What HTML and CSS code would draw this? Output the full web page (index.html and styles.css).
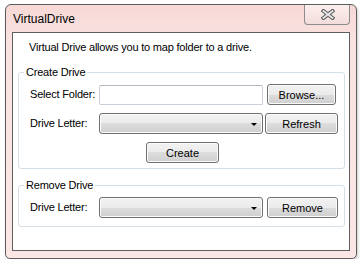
FILE: index.html
```html
<!DOCTYPE html>
<html lang="en">
<head>
    <meta charset="UTF-8">
    <title>VirtualDrive</title>
    <link rel="stylesheet" href="styles.css">
</head>
<body>
    <div class="window">
        <div class="titlebar">
            <span class="title">VirtualDrive</span>
            <button class="close" title="Close">
                <svg width="14" height="11" viewBox="0 0 14 11">
                    <path d="M2.5 2 L11.5 9 M11.5 2 L2.5 9" stroke="#5f5f5f" stroke-width="4" stroke-linecap="square"/>
                    <path d="M2.5 2 L11.5 9 M11.5 2 L2.5 9" stroke="#e6e6e6" stroke-width="1.8" stroke-linecap="square"/>
                </svg>
            </button>
        </div>

        <div class="client">
            <p class="intro">Virtual Drive allows you to map folder to a drive.</p>

            <fieldset class="group group-create">
                <legend>Create Drive</legend>
                <div class="row">
                    <label>Select Folder:</label>
                    <input type="text" class="textbox">
                    <button class="btn btn-browse">Browse...</button>
                </div>
                <div class="row">
                    <label>Drive Letter:</label>
                    <div class="combo"><span class="arrow"></span></div>
                    <button class="btn btn-refresh">Refresh</button>
                </div>
                <div class="row">
                    <button class="btn btn-create">Create</button>
                </div>
            </fieldset>

            <fieldset class="group group-remove">
                <legend>Remove Drive</legend>
                <div class="row">
                    <label>Drive Letter:</label>
                    <div class="combo"><span class="arrow"></span></div>
                    <button class="btn btn-remove">Remove</button>
                </div>
            </fieldset>
        </div>
    </div>
</body>
</html>
```

FILE: styles.css
```css
* {
    box-sizing: border-box;
}
body {
    margin: 0;
    background-color: #fff;
    font-family: 'Liberation Sans', Arial, sans-serif;
    font-size: 11px;
    letter-spacing: -0.2px;
    color: #000;
}
.window {
    margin: 4px 0 0 5px;
    width: 352px;
    height: 255px;
    border: 1px solid #5c5c5c;
    border-radius: 6px 6px 5px 5px;
    background: linear-gradient(#f7d9d7, #f9e3e1 40px, #fae7e5);
    box-shadow: 1px 2px 3px rgba(0,0,0,0.2);
}
.titlebar {
    height: 27px;
    display: flex;
    justify-content: space-between;
    align-items: flex-start;
}
.title {
    font-size: 12px;
    letter-spacing: 0;
    padding: 7px 0 0 7px;
}
.close {
    width: 46px;
    height: 20px;
    margin-right: 6px;
    padding: 0 0 1px 2px;
    border: 1px solid #8c8c8c;
    border-top: none;
    border-radius: 0 0 4px 4px;
    background: linear-gradient(#fcefee, #f3dddb);
    display: flex;
    align-items: center;
    justify-content: center;
}
.client {
    margin: 0 6px;
    height: 219px;
    border: 1px solid #5e5e5e;
    background-color: #fff;
}
.intro {
    margin: 0;
    padding: 8px 0 0 16px;
    line-height: 13px;
}
.group {
    margin: 12px 4px 0 5px;
    padding: 5px 0 5px 0;
    border: 1px solid #d5dfe5;
    border-radius: 3px;
    min-width: 0;
}
.group legend {
    margin-left: 5px;
    padding: 0 2px;
    line-height: 13px;
}
.group-remove {
    margin-top: 10px;
    padding-bottom: 8px;
}
.row {
    display: flex;
    align-items: flex-start;
    height: 21px;
    padding-left: 11px;
    margin-top: 8px;
}
.row:first-of-type {
    margin-top: 0;
}
.row label {
    width: 69px;
    line-height: 21px;
}
.textbox {
    width: 164px;
    height: 20px;
    margin: 1px 0 0 0;
    border: 1px solid #c9d0d8;
    border-top-color: #b3b8c0;
    border-radius: 2px;
    font: inherit;
}
.btn,
.combo {
    height: 21px;
    border: 1px solid #707070;
    border-radius: 3px;
    background: linear-gradient(#f2f2f2, #ebebeb 50%, #dddddd 50%, #cfcfcf);
    box-shadow: inset 0 0 0 1px #fbfbfb;
    font: inherit;
    color: #000;
    padding: 0;
}
.combo {
    width: 164px;
    display: flex;
    justify-content: flex-end;
    align-items: center;
    padding-right: 5px;
}
.arrow {
    width: 0;
    height: 0;
    border-left: 3px solid transparent;
    border-right: 3px solid transparent;
    border-top: 3px solid #000;
    margin-top: 1px;
}
.btn-browse {
    width: 69px;
    margin-left: 4px;
}
.btn-refresh {
    width: 73px;
    margin-left: 2px;
}
.btn-create {
    width: 73px;
    margin-left: 116px;
}
.btn-remove {
    width: 71px;
    margin-left: 4px;
}
```
